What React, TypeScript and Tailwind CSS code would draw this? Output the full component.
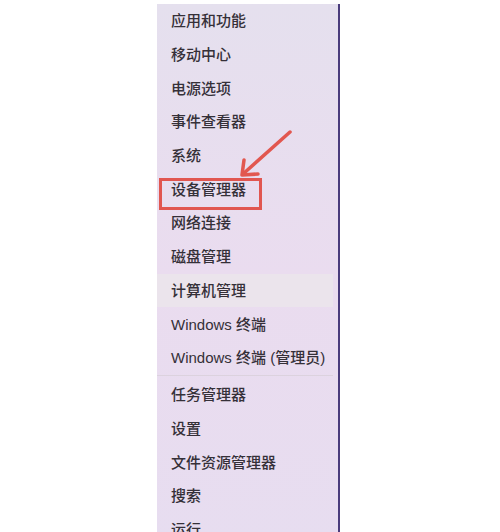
import React from 'react';

const topItems = [
  '应用和功能',
  '移动中心',
  '电源选项',
  '事件查看器',
  '系统',
  '设备管理器',
  '网络连接',
  '磁盘管理',
  '计算机管理',
  'Windows 终端',
  'Windows 终端 (管理员)',
];

const bottomItems = ['任务管理器', '设置', '文件资源管理器', '搜索', '运行'];

const MenuRow: React.FC<{ label: string; hovered?: boolean }> = ({ label, hovered }) => (
  <div
    className={`flex items-center h-[33.7px] pl-[14px] mr-[5px] text-[15px] font-medium leading-none text-[#353038] ${
      hovered ? 'bg-[#ebe4ec]' : ''
    }`}
  >
    {label}
  </div>
);

const Arrow = () => (
  <svg
    className="absolute left-[80px] top-[121px]"
    width="60"
    height="60"
    viewBox="0 0 60 60"
    fill="none"
    stroke="#e2574f"
    strokeWidth="3.5"
    strokeLinecap="round"
    strokeLinejoin="round"
  >
    <path d="M53 7 L6 49" />
    <path d="M7 35 L5 50 L21 49" />
  </svg>
);

export default function App() {
  return (
    <div
      className="w-[500px] h-[532px] bg-white overflow-hidden flex"
      style={{ fontFamily: '"Liberation Sans", "Noto Sans CJK SC", sans-serif' }}
    >
      <div className="relative ml-[157px] mt-[4px] w-[183px] h-[540px] border-r-2 border-[#4a3c7c] bg-linear-to-b from-[#e5e0ee] via-[#eadcef] to-[#e7ddf0]">
        {topItems.map((item) => (
          <MenuRow key={item} label={item} hovered={item === '计算机管理'} />
        ))}
        <div className="h-[3.3px] flex items-start">
          <div className="w-[176px] h-px bg-[#dcd2de]" />
        </div>
        {bottomItems.map((item) => (
          <MenuRow key={item} label={item} />
        ))}

        <div className="absolute left-[2px] top-[174px] w-[103px] h-[32px] border-[3px] border-[#e15650]" />
        <Arrow />
      </div>
    </div>
  );
}
